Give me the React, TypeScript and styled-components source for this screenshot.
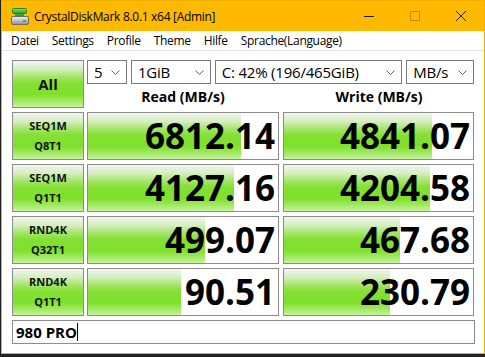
import React from "react";
import styled, { createGlobalStyle } from "styled-components";

const GlobalStyle = createGlobalStyle`
  html, body {
    margin: 0;
    padding: 0;
    background: #232323;
  }
  body {
    font-family: "Open Sans", "Noto Sans", "Liberation Sans", sans-serif;
    color: #000;
  }
`;

interface Result {
  name: string;
  sub: string;
  read: string;
  readBar: number;
  write: string;
  writeBar: number;
}

const results: Result[] = [
  { name: "SEQ1M", sub: "Q8T1", read: "6812.14", readBar: 153, write: "4841.07", writeBar: 148 },
  { name: "SEQ1M", sub: "Q1T1", read: "4127.16", readBar: 146, write: "4204.58", writeBar: 146 },
  { name: "RND4K", sub: "Q32T1", read: "499.07", readBar: 117, write: "467.68", writeBar: 116 },
  { name: "RND4K", sub: "Q1T1", read: "90.51", readBar: 93, write: "230.79", writeBar: 106 },
];

const menuItems = ["Datei", "Settings", "Profile", "Theme", "Hilfe", "Sprache(Language)"];

const greenFill = `linear-gradient(
  to bottom,
  #f3f5f1 0%,
  #d6eec0 18%,
  #a6e66c 34%,
  #84e034 48%,
  #7fe02b 72%,
  #9ee85d 86%,
  #c8f3a0 100%
)`;

const Window = styled.div`
  box-sizing: border-box;
  width: 484px;
  height: 354px;
  margin-left: 1px;
  border: 1px solid #f0b000;
  background: #fff;
  display: flex;
  flex-direction: column;
`;

const TitleBar = styled.div`
  height: 30px;
  background: #ffb900;
  display: flex;
  align-items: center;
  padding-left: 9px;
`;

const TitleText = styled.span`
  font-size: 12px;
  margin-left: 5px;
  flex: 1;
  letter-spacing: -0.3px;
`;

const WinButton = styled.div`
  width: 46px;
  height: 30px;
  display: flex;
  align-items: center;
  justify-content: center;
`;

const MenuBar = styled.div`
  height: 19px;
  border-bottom: 1px solid #e3e3e3;
  display: flex;
  align-items: center;
  padding-left: 9px;
`;

const MenuItem = styled.span`
  font-size: 12px;
  margin-right: 13px;
  letter-spacing: -0.32px;
`;

const Main = styled.div`
  padding: 9px 8px 0 10px;
  display: flex;
  flex-direction: column;
  gap: 4px;
`;

const Row = styled.div<{ $height: number }>`
  display: grid;
  grid-template-columns: 72px 192px 192px;
  column-gap: 3px;
  height: ${(p) => p.$height}px;

  & > :nth-child(3) {
    margin-left: 1px;
  }
`;

const GreenButton = styled.div`
  box-sizing: border-box;
  border: 1px solid #8c8c8c;
  background: ${greenFill};
  display: flex;
  flex-direction: column;
  align-items: center;
  justify-content: center;
  color: #111;
  font-weight: 700;
`;

const AllButton = styled(GreenButton)`
  font-size: 15px;
`;

const TestLabel = styled(GreenButton)`
  font-size: 11px;
  line-height: 20px;
`;

const Controls = styled.div`
  grid-column: span 2;
  display: flex;
  flex-direction: column;
`;

const SelectRow = styled.div`
  display: flex;
  gap: 4px;
  height: 24px;
`;

const Select = styled.div<{ $width: number }>`
  box-sizing: border-box;
  width: ${(p) => p.$width}px;
  height: 24px;
  border: 1px solid #7a7a7a;
  background: #fff;
  display: flex;
  align-items: center;
  padding: 0 6px 0 6px;
  font-size: 15px;
  letter-spacing: -0.2px;
`;

const SelectText = styled.span`
  flex: 1;
  white-space: nowrap;
  overflow: hidden;
`;

const Heads = styled.div`
  display: grid;
  grid-template-columns: 192px 192px;
  column-gap: 4px;
  height: 24px;
`;

const Head = styled.div`
  display: flex;
  align-items: center;
  justify-content: center;
  font-size: 14px;
  font-weight: 700;
  padding-top: 1px;
`;

const ValueBox = styled.div`
  position: relative;
  box-sizing: border-box;
  border: 1px solid #8c8c8c;
  background: #fff;
  overflow: hidden;
`;

const Bar = styled.div`
  position: absolute;
  left: 0;
  top: 0;
  bottom: 0;
  background: ${greenFill};
`;

const Value = styled.div`
  position: relative;
  text-align: right;
  font-size: 35px;
  font-weight: 700;
  line-height: 46px;
  padding-right: 3px;
  letter-spacing: 0;
`;

const Comment = styled.div`
  box-sizing: border-box;
  height: 24px;
  width: 463px;
  border: 1px solid #8c8c8c;
  display: flex;
  align-items: center;
  padding-left: 3px;
  font-size: 15px;
  font-weight: 700;
`;

const Caret = styled.span`
  display: inline-block;
  width: 1px;
  height: 18px;
  background: #000;
`;

const Chevron = () => (
  <svg width="9" height="5" viewBox="0 0 9 5">
    <path d="M0.5 0.5 L4.5 4.5 L8.5 0.5" fill="none" stroke="#606060" strokeWidth="1" />
  </svg>
);

const AppIcon = () => (
  <svg width="18" height="17" viewBox="0 0 18 17">
    <defs>
      <linearGradient id="lid" x1="0" y1="0" x2="0" y2="1">
        <stop offset="0" stopColor="#8be05a" />
        <stop offset="1" stopColor="#2f9e25" />
      </linearGradient>
      <linearGradient id="body" x1="0" y1="0" x2="0" y2="1">
        <stop offset="0" stopColor="#f4f4f4" />
        <stop offset="1" stopColor="#8e8e8e" />
      </linearGradient>
    </defs>
    <rect x="1.5" y="0.5" width="14" height="5" rx="1" fill="url(#lid)" stroke="#2b8a1f" />
    <rect x="4" y="6" width="9" height="2" fill="#3c9e2c" />
    <rect x="0.5" y="8.5" width="17" height="8" rx="1.5" fill="url(#body)" stroke="#6d6d6d" />
    <rect x="12" y="12" width="3" height="2" fill="#35c030" />
  </svg>
);

const App: React.FC = () => {
  return (
    <>
      <GlobalStyle />
      <Window>
        <TitleBar>
          <AppIcon />
          <TitleText>CrystalDiskMark 8.0.1 x64 [Admin]</TitleText>
          <WinButton>
            <svg width="10" height="10" viewBox="0 0 10 10">
              <path d="M0 5.5 H10" stroke="#1a1a1a" strokeWidth="1" />
            </svg>
          </WinButton>
          <WinButton>
            <svg width="10" height="10" viewBox="0 0 10 10">
              <rect x="0.5" y="0.5" width="9" height="9" fill="none" stroke="#c28c00" strokeWidth="1" />
            </svg>
          </WinButton>
          <WinButton>
            <svg width="10" height="10" viewBox="0 0 10 10">
              <path d="M0 0 L10 10 M10 0 L0 10" stroke="#1a1a1a" strokeWidth="1" />
            </svg>
          </WinButton>
        </TitleBar>
        <MenuBar>
          {menuItems.map((m) => (
            <MenuItem key={m}>{m}</MenuItem>
          ))}
        </MenuBar>
        <Main>
          <Row $height={48}>
            <AllButton>All</AllButton>
            <Controls>
              <SelectRow>
                <Select $width={40}>
                  <SelectText>5</SelectText>
                  <Chevron />
                </Select>
                <Select $width={80}>
                  <SelectText>1GiB</SelectText>
                  <Chevron />
                </Select>
                <Select $width={188}>
                  <SelectText>C: 42% (196/465GiB)</SelectText>
                  <Chevron />
                </Select>
                <Select $width={68}>
                  <SelectText>MB/s</SelectText>
                  <Chevron />
                </Select>
              </SelectRow>
              <Heads>
                <Head>Read (MB/s)</Head>
                <Head>Write (MB/s)</Head>
              </Heads>
            </Controls>
          </Row>
          {results.map((r, i) => (
            <Row $height={48} key={i}>
              <TestLabel>
                <span>{r.name}</span>
                <span>{r.sub}</span>
              </TestLabel>
              <ValueBox>
                <Bar style={{ width: r.readBar }} />
                <Value>{r.read}</Value>
              </ValueBox>
              <ValueBox>
                <Bar style={{ width: r.writeBar }} />
                <Value>{r.write}</Value>
              </ValueBox>
            </Row>
          ))}
          <Comment>
            980 PRO
            <Caret />
          </Comment>
        </Main>
      </Window>
    </>
  );
};

export default App;
